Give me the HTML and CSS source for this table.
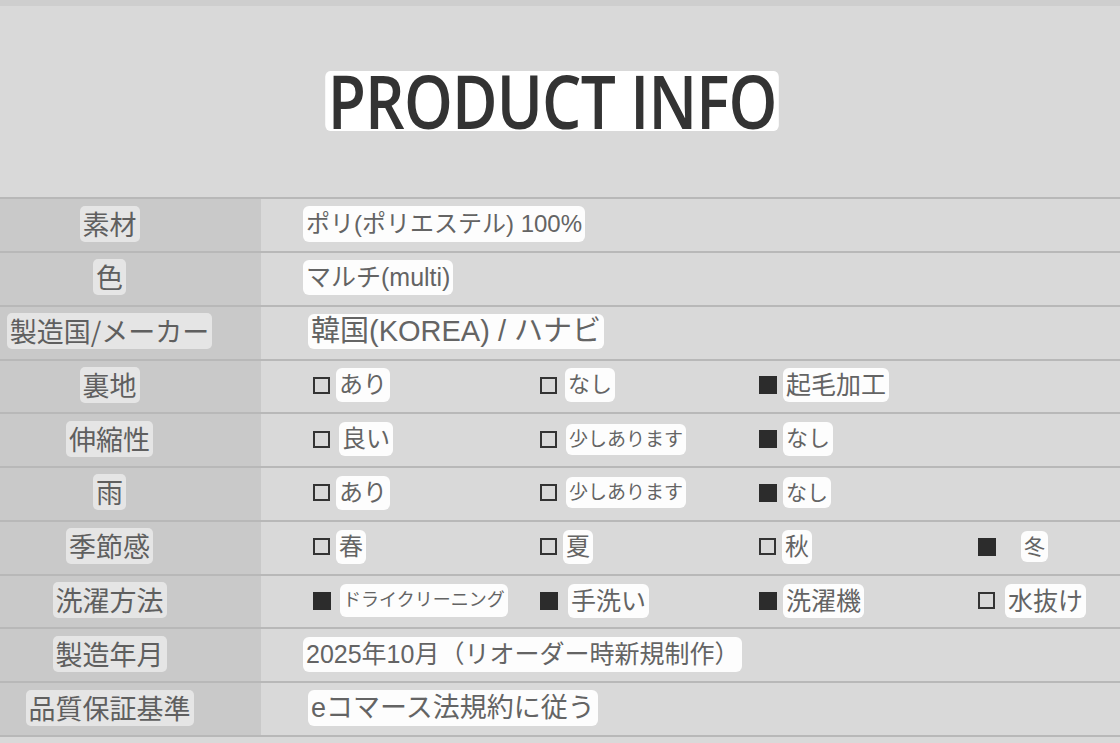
FILE: index.html
```html
<!DOCTYPE html>
<html lang="ja">
<head>
<meta charset="utf-8">
<title>PRODUCT INFO</title>
<link rel="stylesheet" href="styles.css">
</head>
<body>
<div class="page">
  <header class="header">
    <h1 class="title"><span class="title-text">PRODUCT INFO</span></h1>
  </header>
  <div class="table">
    <div class="row">
      <div class="label"><span class="lchip">素材</span></div>
      <div class="value"><span class="chip f24">ポリ(ポリエステル) 100%</span></div>
    </div>
    <div class="row">
      <div class="label"><span class="lchip">色</span></div>
      <div class="value"><span class="chip f25">マルチ(multi)</span></div>
    </div>
    <div class="row">
      <div class="label"><span class="lchip">製造国/メーカー</span></div>
      <div class="value"><span class="chip f29 ind5">韓国(KOREA) / ハナビ</span></div>
    </div>
    <div class="row">
      <div class="label"><span class="lchip">裏地</span></div>
      <div class="value opts">
        <div class="opt"><i class="box"></i><span class="chip">あり</span></div>
        <div class="opt"><i class="box"></i><span class="chip gap2 f22">なし</span></div>
        <div class="opt"><i class="box on"></i><span class="chip f25o">起毛加工</span></div>
      </div>
    </div>
    <div class="row">
      <div class="label"><span class="lchip">伸縮性</span></div>
      <div class="value opts">
        <div class="opt"><i class="box"></i><span class="chip sp">良い</span></div>
        <div class="opt"><i class="box"></i><span class="chip sp sm">少しあります</span></div>
        <div class="opt"><i class="box on"></i><span class="chip f22">なし</span></div>
      </div>
    </div>
    <div class="row">
      <div class="label"><span class="lchip">雨</span></div>
      <div class="value opts">
        <div class="opt"><i class="box"></i><span class="chip">あり</span></div>
        <div class="opt"><i class="box"></i><span class="chip sp sm">少しあります</span></div>
        <div class="opt"><i class="box on"></i><span class="chip sm2">なし</span></div>
      </div>
    </div>
    <div class="row">
      <div class="label"><span class="lchip">季節感</span></div>
      <div class="value opts">
        <div class="opt"><i class="box"></i><span class="chip">春</span></div>
        <div class="opt"><i class="box"></i><span class="chip">夏</span></div>
        <div class="opt"><i class="box"></i><span class="chip">秋</span></div>
        <div class="opt"><i class="box on"></i><span class="chip far sm2">冬</span></div>
      </div>
    </div>
    <div class="row">
      <div class="label"><span class="lchip">洗濯方法</span></div>
      <div class="value opts">
        <div class="opt"><i class="box on"></i><span class="chip sp xs">ドライクリーニング</span></div>
        <div class="opt"><i class="box on"></i><span class="chip sp2 f25o">手洗い</span></div>
        <div class="opt"><i class="box on"></i><span class="chip f25o">洗濯機</span></div>
        <div class="opt"><i class="box"></i><span class="chip sp2 f25o">水抜け</span></div>
      </div>
    </div>
    <div class="row">
      <div class="label"><span class="lchip">製造年月</span></div>
      <div class="value"><span class="chip f25">2025年10月（リオーダー時新規制作）</span></div>
    </div>
    <div class="row">
      <div class="label"><span class="lchip">品質保証基準</span></div>
      <div class="value"><span class="chip f27 ind5">eコマース法規約に従う</span></div>
    </div>
  </div>
</div>
</body>
</html>
```

FILE: styles.css
```css
* { box-sizing: border-box; }

html, body {
  margin: 0;
  padding: 0;
  background: #d9d9d9;
}

body {
  font-family: "Liberation Sans", "Noto Sans CJK JP", sans-serif;
  color: #646464;
}

.page {
  width: 1120px;
  height: 743px;
  overflow: hidden;
  background: #d9d9d9;
}

.header {
  height: 199px;
  border-top: 6px solid #cecece;
  border-bottom: 2px solid #b8b8b8;
  display: flex;
  align-items: flex-start;
  justify-content: center;
  padding-top: 65px;
  padding-right: 15px;
}

.title {
  margin: 0;
  font-weight: normal;
  line-height: 0;
}

.title-text {
  display: inline-block;
  background: #ffffff;
  border-radius: 6px;
  padding: 0 3px;
  font-family: "Open Sans", sans-serif;
  font-weight: 600;
  font-size: 74px;
  line-height: 60px;
  color: #333333;
  letter-spacing: -1px;
  transform: scaleX(0.84);
}

.row {
  display: grid;
  grid-template-columns: 261px 1fr;
  height: 54px;
  border-bottom: 2px solid #b8b8b8;
}

.row:nth-child(even) {
  height: 53.6px;
}

.label {
  background: #c9c9c9;
  display: flex;
  align-items: center;
  justify-content: center;
  padding-right: 42px;
  padding-bottom: 3px;
}

.lchip {
  background: #e5e5e5;
  border-radius: 5px;
  padding: 0 3px;
  font-family: "Noto Sans CJK JP", sans-serif;
  font-weight: 400;
  font-size: 27px;
  line-height: 36px;
  color: #5f5f5f;
  white-space: nowrap;
}

.value {
  display: flex;
  align-items: center;
  padding-left: 42px;
  padding-bottom: 2px;
}

.chip {
  background: #fdfdfd;
  border-radius: 6px;
  padding: 0 3px;
  font-size: 24px;
  line-height: 34px;
  color: #646464;
  white-space: nowrap;
}

.f22 { font-size: 22px; }
.f24 { font-size: 24px; line-height: 36px; }
.f25 { font-size: 25px; line-height: 35px; }
.f25o { font-size: 25px; }
.f27 { font-size: 27px; line-height: 36px; }
.f29 { font-size: 29px; line-height: 35px; }
.ind5 { margin-left: 5px; }

.opts {
  padding-left: 52px;
}

.opt {
  display: flex;
  align-items: center;
  width: 219px;
  flex: none;
}

.opt:first-child {
  width: 227px;
}

.box {
  display: block;
  width: 17px;
  height: 17px;
  border: 2.5px solid #333333;
  flex: none;
}

.box.on {
  background: #2c2c2c;
  border-color: #2c2c2c;
  width: 18px;
  height: 18px;
}

.opt .chip { margin-left: 6px; }
.opt .chip.gap2 { margin-left: 8px; }
.opt .chip.sp { margin-left: 9px; }
.opt .chip.sp2 { margin-left: 10px; }
.opt .chip.far { margin-left: 25px; }

.chip.sm { font-size: 19px; line-height: 31px; }
.chip.sm2 { font-size: 21px; line-height: 31px; }
.chip.xs { font-size: 18px; line-height: 33px; }
```
